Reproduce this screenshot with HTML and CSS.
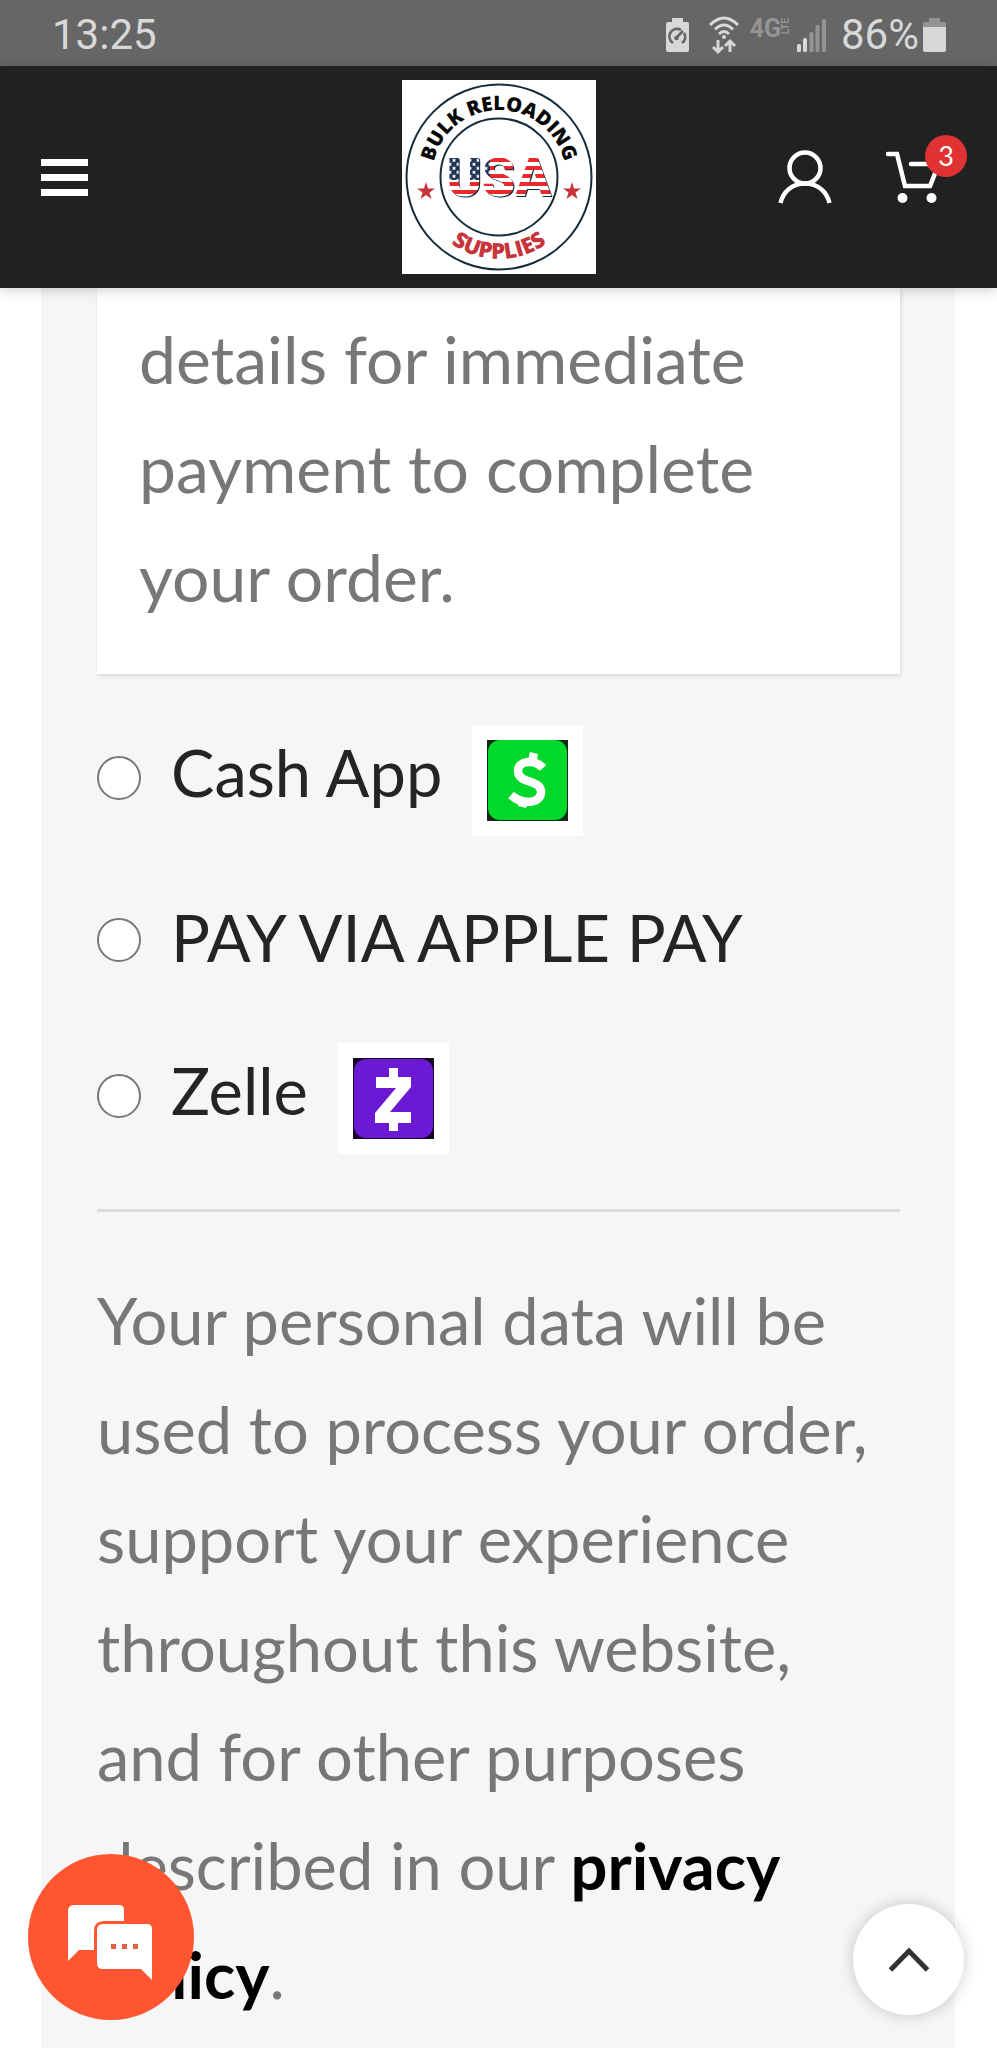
FILE: index.html
```html
<!DOCTYPE html>
<html lang="en">
<head>
<meta charset="utf-8">
<meta name="viewport" content="width=device-width, initial-scale=1">
<title>Checkout</title>
<link rel="stylesheet" href="styles.css">
</head>
<body>
<div class="status">
  <span class="status-time">13:25</span>
  <div class="status-icons">
    <svg class="saver" width="23" height="34" viewBox="0 0 23 34"><path fill="#d8d8d8" d="M6 0h11v4h4q2 0 2 2v26q0 2-2 2H2q-2 0-2-2V6q0-2 2-2h4z"/><path d="M7 25A7 7 0 0 1 15 12M18 15a7 7 0 0 1-2 10M10 20l7-7" fill="none" stroke="#666" stroke-width="2.6"/><circle cx="10.500" cy="20" r="2.300" fill="#666"/></svg>
    <svg class="wifi" width="30" height="39" viewBox="0 0 30 39"><g fill="none" stroke="#d8d8d8" stroke-width="3"><path d="M1 9Q15-5 29 9M6 13.500Q15 4.500 24 13.500M10 18Q15 13 20 18"/><path d="M9 24v12M4 31l5 5 5-5M21 36V25M16 30l5-5 5 5"/></g><circle cx="15" cy="21" r="2" fill="#d8d8d8"/></svg>
    <span class="network"><span class="network-gen">4G</span><span class="network-lte">LTE</span></span>
    <svg class="signal" width="29" height="33" viewBox="0 0 29 33"><g fill="#d8d8d8"><rect y="25" width="4" height="8" rx="1.500"/><rect x="6" y="19" width="4" height="14" rx="1.500"/></g><g fill="#949494"><rect x="12.500" y="13" width="4" height="20" rx="1.500"/><rect x="18.500" y="6" width="4" height="27" rx="1.500"/><rect x="25" y="0" width="4" height="33" rx="1.500"/></g></svg>
    <span class="status-level">86%</span>
    <svg width="23" height="34" viewBox="0 0 23 34"><path fill="#949494" d="M6 0h11v4h4q2 0 2 2v4H0V6q0-2 2-2h4z"/><path fill="#d8d8d8" d="M0 9h23v23q0 2-2 2H2q-2 0-2-2z"/></svg>
  </div>
</div>
<header class="header">
  <button class="icon-button menu" type="button" aria-label="Menu"><svg width="47" height="37" viewBox="0 0 47 37"><path fill="#fff" d="M0 0h47v7H0zM0 15h47v7H0zM0 30h47v7H0z"/></svg></button>
  <a class="logo" href="#" aria-label="Bulk Reloading Supplies USA">
    <svg width="194" height="194" viewBox="0 0 194 194">
      <defs>
        <path id="arc-bottom" d="M15 97a82 82 0 0 0 164 0"/>
        <path id="arc-title" d="M33.600 118.800A67 67 0 1 1 160.400 118.800"/>
        <pattern id="stars" width="8" height="8" patternUnits="userSpaceOnUse"><rect width="8" height="8" fill="#1f3657"/><path fill="#fff" d="M2 0l.7 1.400 1.500.2-1.100 1 .3 1.500L2 3.400l-1.400.7.3-1.500-1.100-1 1.500-.2zM6 4l.7 1.400 1.500.2-1.100 1 .3 1.500L6 7.400l-1.400.7.3-1.500-1.100-1 1.500-.2z"/></pattern>
        <pattern id="flag" width="110" height="60" x="46" y="74" patternUnits="userSpaceOnUse"><rect width="110" height="60" fill="#fff"/><path stroke="#e92a2c" stroke-width="4" d="M0 6h110M0 14h110M0 22h110M0 30h110M0 38h110M0 46h110"/><rect width="42" height="26" fill="url(#stars)"/></pattern>
      </defs>
      <rect width="194" height="194" fill="#fff"/>
      <circle cx="97" cy="97" r="92.500" fill="none" stroke="#142c3c" stroke-width="2"/>
      <circle cx="97" cy="97" r="58.500" fill="none" stroke="#142c3c" stroke-width="2"/>
      <text class="logo-ring" text-anchor="middle"><textPath href="#arc-title" startOffset="50%">BULK RELOADING</textPath></text>
      <text class="logo-ring logo-ring-red" text-anchor="middle"><textPath href="#arc-bottom" startOffset="50%">SUPPLIES</textPath></text>
      <text class="logo-usa" x="97" y="116" text-anchor="middle" fill="url(#flag)">USA</text>
      <g fill="#c7343a"><path d="M24 102l2 6.500h7l-5.500 4 2 6.500-5.500-4-5.500 4 2-6.500-5.500-4h7z"/><path d="M170 102l2 6.500h7l-5.500 4 2 6.500-5.500-4-5.500 4 2-6.500-5.500-4h7z"/></g>
    </svg>
  </a>
  <nav class="actions" aria-label="Shop">
    <a class="action" href="#" aria-label="My account"><svg width="54" height="54" viewBox="0 0 54 54"><g fill="none" stroke="#fff" stroke-width="4.500"><circle cx="27" cy="18" r="15.500"/><path d="M2.500 53C5 42 14 33.500 27 33.500S49 42 51.500 53"/></g></svg></a>
    <a class="action cart" href="#" aria-label="Cart, 3 items"><svg width="54" height="54" viewBox="0 0 54 54"><g fill="none" stroke="#fff" stroke-width="4.500" stroke-linecap="round"><path d="M2 4h9l8 32h25l8-20"/><path d="M25 14h22"/></g><g fill="#fff"><circle cx="16.500" cy="48" r="5"/><circle cx="45.500" cy="48" r="5"/></g></svg><span class="badge">3</span></a>
  </nav>
</header>
<main class="checkout">
  <div class="notice"><p>details for immediate<br>payment to complete<br>your order.</p></div>
  <form class="methods">
    <div class="method method-icon">
      <input type="radio" name="payment" id="cash">
      <label for="cash">Cash App</label>
      <svg class="tile" width="111" height="111" viewBox="0 0 111 111"><rect width="111" height="111" fill="#fff"/><rect x="15" y="15" width="81" height="81" fill="#152b18"/><rect x="16" y="15" width="79" height="80" rx="12" fill="#00d82b"/><path d="M71 43C63 34 46 35 46 46c0 13 23 8 23 21 0 12-19 13-30 3M62 28l-2 9M50 82l2-9" fill="none" stroke="#fff" stroke-width="8.500"/></svg>
    </div>
    <div class="method">
      <input type="radio" name="payment" id="apple">
      <label for="apple">PAY VIA APPLE PAY</label>
    </div>
    <div class="method method-icon">
      <input type="radio" name="payment" id="zelle">
      <label for="zelle">Zelle</label>
      <svg class="tile" width="111" height="111" viewBox="0 0 111 111"><rect width="111" height="111" fill="#fff"/><rect x="15" y="15" width="81" height="81" fill="#160a28"/><rect x="16" y="16" width="79" height="79" rx="12" fill="#6b19d2"/><path fill="#fff" d="M51 25h9v9h13v10L52 69h21v11H60v8h-9v-8H37V70l21-25H38V34h13z"/></svg>
    </div>
  </form>
  <p class="privacy">Your personal data will be<br>used to process your order,<br>support your experience<br>throughout this website,<br>and for other purposes<br>described in our <a href="#">privacy<br>policy</a>.</p>
</main>
<button class="chat" type="button" aria-label="Open chat"><svg width="86" height="76" viewBox="0 0 86 76"><path fill="#fff" d="M6 0h45q5 0 5 5v11H36q-10 0-10 10v19H11L0 56V6q0-6 6-6z"/><path fill="#fff" d="M35 19h44q5 0 5 5v51L73 64H35q-6 0-6-6V25q0-6 6-6z"/><path fill="#e8603f" d="M43 39h5v5h-5zM54 39h5v5h-5zM65 39h5v5h-5z"/></svg></button>
<button class="to-top" type="button" aria-label="Back to top"><svg width="42" height="26" viewBox="0 0 42 26"><path d="M2.500 23L21 4l18.500 19" fill="none" stroke="#333" stroke-width="5"/></svg></button>
</body>
</html>
```
FILE: styles.css
```css
* { box-sizing: border-box; }
body {
  margin: 0;
  background: #fff;
  color: #777;
  font-family: Lato, "Noto Sans", sans-serif;
  font-size: 65px;
  line-height: 109px;
}
p { margin: 0; }
a { color: inherit; text-decoration: none; }
svg { display: block; flex: none; }
button { border: 0; padding: 0; background: none; cursor: pointer; }

.status {
  display: flex;
  align-items: center;
  justify-content: space-between;
  height: 66px;
  padding: 4px 51px 0 52px;
  background: #666;
  color: #d8d8d8;
  font: 42px/62px Roboto, sans-serif;
}
.status-icons { display: flex; align-items: center; }
.wifi { margin-left: 20px; }
.network {
  display: flex;
  align-items: flex-start;
  height: 34px;
  margin: 0 7px 0 11px;
  color: #949494;
  font-weight: 700;
}
.network-gen { font-size: 25px; line-height: 22px; }
.network-lte {
  font-size: 10px;
  line-height: 9px;
  writing-mode: vertical-rl;
  rotate: 180deg;
}
.status-level { margin: 0 4px 0 15px; }

.header {
  position: relative;
  z-index: 1;
  display: grid;
  grid-template-columns: 1fr auto 1fr;
  align-items: center;
  padding: 14px 41px;
  background: #212121;
  box-shadow: 0 2px 12px rgba(0, 0, 0, .2);
}
.menu { justify-self: start; }
.actions {
  display: flex;
  justify-content: flex-end;
  gap: 54px;
  padding-right: 16px;
}
.cart { position: relative; }
.badge {
  position: absolute;
  top: -15px;
  right: -27px;
  width: 42px;
  height: 42px;
  border-radius: 50%;
  background: #e03232;
  color: #fff;
  font-size: 27px;
  line-height: 42px;
  text-align: center;
}
.logo-ring {
  font: 800 20px "Open Sans", sans-serif;
  fill: #080808;
}
.logo-ring-red { font-size: 22px; fill: #c7343a; }
.logo-usa {
  font: 900 53px Roboto, sans-serif;
  filter: drop-shadow(1px 1px 0 #142c3c);
}

.checkout {
  margin: 0 42px 0 41px;
  padding: 0 55px 19px 56px;
  background: #f6f6f6;
}
.notice {
  padding: 16px 42px 43px;
  background: #fff;
  box-shadow: 1px 2px 4px rgba(0, 0, 0, .12);
  font-size: 66px;
}
.methods {
  display: flex;
  flex-direction: column;
  gap: 49px;
  padding: 51px 0 55px;
  border-bottom: 3px solid #dcdcdc;
  color: #242424;
}
.method {
  display: flex;
  align-items: center;
  gap: 30px;
}
.method label { padding-bottom: 4px; line-height: 105px; }
.method-icon label { padding-bottom: 16px; line-height: 95px; }
.method input {
  appearance: none;
  flex: none;
  width: 44px;
  height: 44px;
  margin: 0;
  border: 2px solid #777;
  border-radius: 50%;
  background: #fff;
}
.method input:checked { border-width: 12px; }
.method-icon input { margin-bottom: 6px; }
.privacy { padding-top: 54px; }
.privacy a { color: #000; font-weight: 700; }

.chat,
.to-top {
  position: fixed;
  z-index: 2;
  display: grid;
  place-items: center;
  border-radius: 50%;
}
.chat {
  left: 28px;
  bottom: 28px;
  width: 166px;
  height: 166px;
  padding-top: 12px;
  background: #ff5530;
}
.to-top {
  right: 33px;
  bottom: 33px;
  width: 111px;
  height: 111px;
  background: #fff;
  box-shadow: 0 0 16px rgba(0, 0, 0, .2);
}
```
